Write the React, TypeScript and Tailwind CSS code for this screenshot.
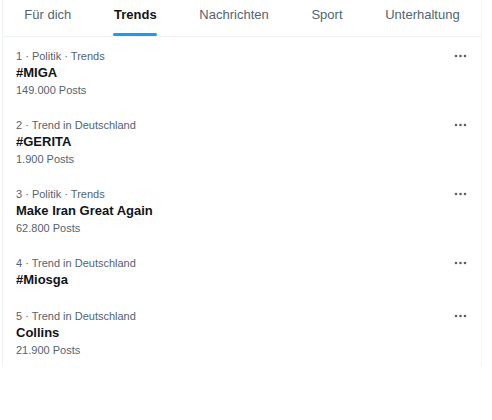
import React from 'react';

interface Trend {
  rank: number;
  context: string;
  name: string;
  posts?: string;
}

const tabs = ['Für dich', 'Trends', 'Nachrichten', 'Sport', 'Unterhaltung'];

const trends: Trend[] = [
  { rank: 1, context: 'Politik · Trends', name: '#MIGA', posts: '149.000 Posts' },
  { rank: 2, context: 'Trend in Deutschland', name: '#GERITA', posts: '1.900 Posts' },
  { rank: 3, context: 'Politik · Trends', name: 'Make Iran Great Again', posts: '62.800 Posts' },
  { rank: 4, context: 'Trend in Deutschland', name: '#Miosga' },
  { rank: 5, context: 'Trend in Deutschland', name: 'Collins', posts: '21.900 Posts' },
];

function MoreIcon() {
  return (
    <svg width="14" height="6" viewBox="0 0 14 6" className="text-[#536471]" fill="currentColor">
      <circle cx="3" cy="3" r="1.3" />
      <circle cx="7.5" cy="3" r="1.3" />
      <circle cx="12" cy="3" r="1.3" />
    </svg>
  );
}

export default function App() {
  const active = 'Trends';

  return (
    <div className="bg-white min-h-[420px] font-['Liberation_Sans',Arial,sans-serif]">
      <div className="ml-[2px] w-[480px] border-x border-[#eff3f4]">
        {/* Tabs */}
        <div className="flex h-[37px] border-b border-[#eff3f4]">
          {tabs.map((tab) => {
            const isActive = tab === active;
            return (
              <div key={tab} className="relative flex flex-auto justify-center px-4 pt-[7px]">
                <span
                  className={`text-[13px] leading-4 whitespace-nowrap ${
                    isActive ? 'font-bold text-[#0f1419]' : 'text-[#536471]'
                  }`}
                >
                  {tab}
                </span>
                {isActive && (
                  <div className="absolute bottom-0 left-1/2 h-[3px] w-[44px] -translate-x-1/2 rounded-full bg-[#1d9bf0]" />
                )}
              </div>
            );
          })}
        </div>

        {/* Trend list */}
        <div>
          {trends.map((t) => (
            <div key={t.rank} className="flex justify-between pl-[13px] pr-[14px] pt-[11px] pb-2">
              <div className="flex flex-col">
                <span className="text-[11px] leading-4 text-[#536471]">
                  {t.rank} · {t.context}
                </span>
                <span className="text-[13px] leading-[18px] font-bold text-[#0f1419]">{t.name}</span>
                {t.posts && (
                  <span className="text-[11px] leading-4 text-[#536471]">{t.posts}</span>
                )}
              </div>
              <div className="pt-[5px]">
                <MoreIcon />
              </div>
            </div>
          ))}
        </div>
      </div>
    </div>
  );
}
